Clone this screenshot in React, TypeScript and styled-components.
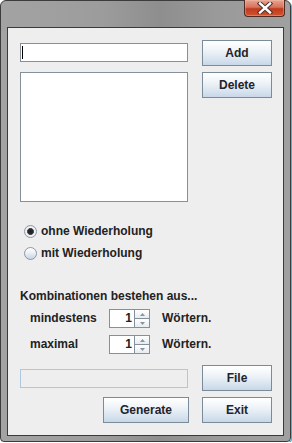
import React from 'react';
import styled, { createGlobalStyle } from 'styled-components';

const GlobalStyle = createGlobalStyle`
  html, body {
    margin: 0;
    padding: 0;
    background: #ffffff;
  }
  body {
    font-family: "Liberation Sans", Arial, sans-serif;
  }
`;

function App() {
  return (
    <>
      <GlobalStyle />
      <Window>
        <TitleBar>
          <CloseButton>
            <svg width="16" height="12" viewBox="0 0 16 12">
              <path d="M3 1.5 L13 10.5 M13 1.5 L3 10.5" stroke="#4a3030" strokeWidth="4.4" strokeLinecap="square" />
              <path d="M3 1.5 L13 10.5 M13 1.5 L3 10.5" stroke="#ffffff" strokeWidth="2.4" strokeLinecap="square" />
            </svg>
          </CloseButton>
        </TitleBar>
        <Content>
          <TopSection>
            <LeftColumn>
              <TextField>
                <Caret />
              </TextField>
              <ListBox />
            </LeftColumn>
            <ButtonColumn>
              <Button>Add</Button>
              <Button>Delete</Button>
            </ButtonColumn>
          </TopSection>

          <RadioGroup>
            <RadioRow>
              <Radio $checked />
              <span>ohne Wiederholung</span>
            </RadioRow>
            <RadioRow>
              <Radio />
              <span>mit Wiederholung</span>
            </RadioRow>
          </RadioGroup>

          <Heading>Kombinationen bestehen aus...</Heading>
          <SpinnerGrid>
            <Label>mindestens</Label>
            <Spinner>
              <SpinValue>1</SpinValue>
              <SpinArrows>
                <SpinArrow>
                  <svg width="5" height="3" viewBox="0 0 5 3"><path d="M0 3 L2.5 0 L5 3 Z" fill="#8a949e" /></svg>
                </SpinArrow>
                <SpinArrow>
                  <svg width="5" height="3" viewBox="0 0 5 3"><path d="M0 0 L2.5 3 L5 0 Z" fill="#8a949e" /></svg>
                </SpinArrow>
              </SpinArrows>
            </Spinner>
            <Label>Wörtern.</Label>

            <Label>maximal</Label>
            <Spinner>
              <SpinValue>1</SpinValue>
              <SpinArrows>
                <SpinArrow>
                  <svg width="5" height="3" viewBox="0 0 5 3"><path d="M0 3 L2.5 0 L5 3 Z" fill="#8a949e" /></svg>
                </SpinArrow>
                <SpinArrow>
                  <svg width="5" height="3" viewBox="0 0 5 3"><path d="M0 0 L2.5 3 L5 0 Z" fill="#8a949e" /></svg>
                </SpinArrow>
              </SpinArrows>
            </Spinner>
            <Label>Wörtern.</Label>
          </SpinnerGrid>

          <BottomRow>
            <ProgressBar />
            <Button>File</Button>
          </BottomRow>
          <ActionRow>
            <Button $width={86}>Generate</Button>
            <Button>Exit</Button>
          </ActionRow>
        </Content>
      </Window>
    </>
  );
}

export default App;

const Window = styled.div`
  width: 291px;
  height: 442px;
  box-sizing: border-box;
  display: flex;
  flex-direction: column;
  padding: 0 6px 5px 6px;
  border: 1px solid #3c3c3c;
  border-radius: 6px 6px 4px 4px;
  background: linear-gradient(90deg, #a3a3a3 0%, #9c9c9c 35%, #8e8e8e 55%, #9a9a9a 75%, #a0a0a0 100%);
  box-shadow: 1px 1px 0 #3fb6e6;
`;

const TitleBar = styled.div`
  height: 26px;
  display: flex;
  justify-content: flex-end;
  align-items: flex-start;
`;

const CloseButton = styled.div`
  width: 41px;
  height: 17px;
  box-sizing: border-box;
  margin-top: -1px;
  margin-right: -1px;
  display: flex;
  align-items: center;
  justify-content: center;
  border: 1px solid #4f2a22;
  border-top: none;
  border-radius: 0 0 4px 4px;
  background: linear-gradient(180deg, #e7a592 0%, #d7735a 45%, #c2391c 55%, #cf5530 100%);
  box-shadow: inset 0 0 0 1px rgba(255, 200, 180, 0.35);
`;

const Content = styled.div`
  flex: 1;
  display: flex;
  flex-direction: column;
  border: 1px solid #3a3a3a;
  background: #eeeeee;
  color: #222222;
  font-family: "Liberation Sans", Arial, sans-serif;
  font-weight: bold;
  font-size: 12px;
`;

const TopSection = styled.div`
  display: flex;
  gap: 14px;
  padding: 12px 0 0 12px;
`;

const LeftColumn = styled.div`
  display: flex;
  flex-direction: column;
  gap: 10px;
  padding-top: 3px;
`;

const TextField = styled.div`
  width: 168px;
  height: 19px;
  box-sizing: border-box;
  border: 1px solid #86909b;
  background: #ffffff;
  display: flex;
  align-items: center;
  padding-left: 1px;
`;

const Caret = styled.span`
  width: 1px;
  height: 13px;
  background: #000000;
`;

const ListBox = styled.div`
  width: 168px;
  height: 130px;
  box-sizing: border-box;
  border: 1px solid #86909b;
  background: #ffffff;
`;

const ButtonColumn = styled.div`
  display: flex;
  flex-direction: column;
  gap: 6px;
`;

const Button = styled.div<{ $width?: number }>`
  width: ${(p) => p.$width ?? 70}px;
  height: 26px;
  box-sizing: border-box;
  display: flex;
  align-items: center;
  justify-content: center;
  border: 1px solid #7c8b9a;
  background: linear-gradient(180deg, #ffffff 0%, #f1f5f9 35%, #d9e4ef 75%, #c7d7e8 100%);
  color: #22232b;
  font-size: 12px;
  font-weight: bold;
`;

const RadioGroup = styled.div`
  display: flex;
  flex-direction: column;
  margin-top: 18px;
  padding-left: 16px;
`;

const RadioRow = styled.div`
  height: 22px;
  display: flex;
  align-items: center;
  gap: 4px;
`;

const Radio = styled.span<{ $checked?: boolean }>`
  width: 13px;
  height: 13px;
  box-sizing: border-box;
  border-radius: 50%;
  border: 1px solid #8a98a6;
  background: ${(p) =>
    p.$checked
      ? 'radial-gradient(circle at 50% 50%, #1e1e1e 0%, #2a2a2a 30%, #5a5a5a 42%, #f2f4f6 48%, #dfe6ee 100%)'
      : 'linear-gradient(180deg, #ffffff 0%, #eef2f6 40%, #c6d4e3 100%)'};
`;

const Heading = styled.div`
  margin-top: 24px;
  padding-left: 12px;
  height: 16px;
  line-height: 16px;
`;

const SpinnerGrid = styled.div`
  display: grid;
  grid-template-columns: 67px 41px auto;
  column-gap: 12px;
  row-gap: 7px;
  align-items: center;
  margin-top: 5px;
  padding-left: 22px;
`;

const Label = styled.span`
  line-height: 19px;
`;

const Spinner = styled.div`
  width: 41px;
  height: 19px;
  box-sizing: border-box;
  display: flex;
  border: 1px solid #86909b;
  background: #ffffff;
`;

const SpinValue = styled.div`
  flex: 1;
  text-align: right;
  padding-right: 2px;
  line-height: 17px;
  border-bottom: 1px solid #ffffff;
`;

const SpinArrows = styled.div`
  width: 14px;
  display: flex;
  flex-direction: column;
  border-left: 1px solid #86909b;
`;

const SpinArrow = styled.div`
  flex: 1;
  display: flex;
  align-items: center;
  justify-content: center;
  background: linear-gradient(180deg, #ffffff, #e6ecf2);
  & + & {
    border-top: 1px solid #86909b;
  }
`;

const BottomRow = styled.div`
  display: flex;
  align-items: center;
  gap: 14px;
  margin-top: 11px;
  padding-left: 12px;
`;

const ProgressBar = styled.div`
  width: 168px;
  height: 19px;
  box-sizing: border-box;
  border: 1px solid #adc8df;
  background: #eeeeee;
`;

const ActionRow = styled.div`
  display: flex;
  gap: 13px;
  margin-top: 6px;
  padding-left: 95px;
`;
